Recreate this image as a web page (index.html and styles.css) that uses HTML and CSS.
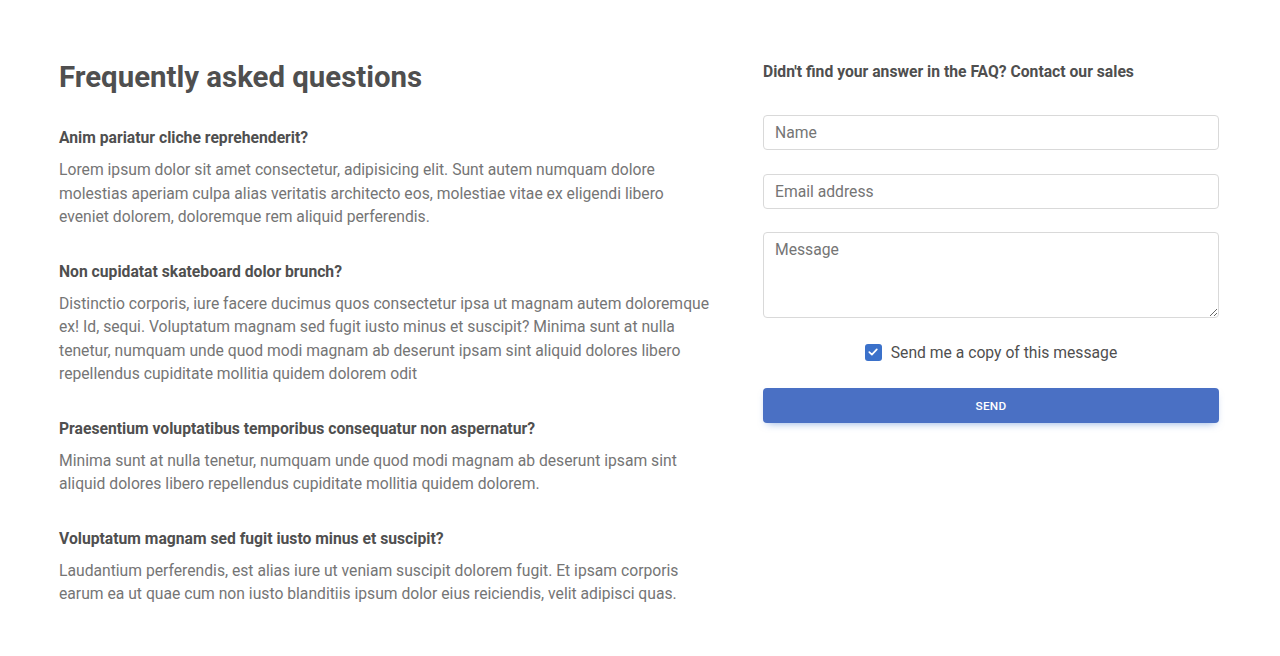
FILE: index.html
```html
<!DOCTYPE html>
<html lang="en">
<head>
<meta charset="utf-8">
<title>FAQ</title>
<link rel="stylesheet" href="styles.css">
</head>
<body>
<main class="page">
  <section class="faq">
    <h1 class="faq-title">Frequently asked questions</h1>
    <div class="qa">
      <h2 class="question">Anim pariatur cliche reprehenderit?</h2>
      <p class="answer">Lorem ipsum dolor sit amet consectetur, adipisicing elit. Sunt autem numquam dolore molestias aperiam culpa alias veritatis architecto eos, molestiae vitae ex eligendi libero eveniet dolorem, doloremque rem aliquid perferendis.</p>
    </div>
    <div class="qa">
      <h2 class="question">Non cupidatat skateboard dolor brunch?</h2>
      <p class="answer">Distinctio corporis, iure facere ducimus quos consectetur ipsa ut magnam autem doloremque ex! Id, sequi. Voluptatum magnam sed fugit iusto minus et suscipit? Minima sunt at nulla tenetur, numquam unde quod modi magnam ab deserunt ipsam sint aliquid dolores libero repellendus cupiditate mollitia quidem dolorem odit</p>
    </div>
    <div class="qa">
      <h2 class="question">Praesentium voluptatibus temporibus consequatur non aspernatur?</h2>
      <p class="answer">Minima sunt at nulla tenetur, numquam unde quod modi magnam ab deserunt ipsam sint aliquid dolores libero repellendus cupiditate mollitia quidem dolorem.</p>
    </div>
    <div class="qa">
      <h2 class="question">Voluptatum magnam sed fugit iusto minus et suscipit?</h2>
      <p class="answer">Laudantium perferendis, est alias iure ut veniam suscipit dolorem fugit. Et ipsam corporis earum ea ut quae cum non iusto blanditiis ipsum dolor eius reiciendis, velit adipisci quas.</p>
    </div>
  </section>
  <section class="contact">
    <h2 class="contact-title">Didn't find your answer in the FAQ? Contact our sales</h2>
    <form class="contact-form">
      <input class="field" type="text" placeholder="Name">
      <input class="field" type="email" placeholder="Email address">
      <textarea class="field field-area" placeholder="Message"></textarea>
      <label class="copy">
        <span class="check">
          <svg width="12" height="12" viewBox="0 0 12 12"><path d="M2.3 6.2 L4.9 8.7 L9.8 3.4" fill="none" stroke="#fff" stroke-width="1.7" stroke-linecap="round" stroke-linejoin="round"/></svg>
        </span>
        <span class="copy-text">Send me a copy of this message</span>
      </label>
      <button class="send" type="button">Send</button>
    </form>
  </section>
</main>
</body>
</html>
```

FILE: styles.css
```css
* { box-sizing: border-box; }
html, body { margin: 0; padding: 0; background: #fff; }
body {
  font-family: Roboto, "Liberation Sans", Arial, sans-serif;
  color: #4f4f4f;
}
.page {
  display: flex;
  gap: 50px;
  padding: 60px 61px 0 59px;
}
.faq { width: 654px; flex: none; }
.contact { width: 456px; flex: none; }

.faq-title {
  margin: 0 0 34px;
  font-size: 29.4px;
  line-height: 34px;
  font-weight: 700;
  color: #4f4f4f;
}
.qa { margin-bottom: 33px; }
.question {
  margin: 0 0 10px;
  font-size: 15.7px;
  line-height: 20px;
  font-weight: 700;
  color: #4f4f4f;
}
.answer {
  margin: 0;
  font-size: 15.7px;
  line-height: 23.5px;
  color: #757575;
}

.contact-title {
  margin: 2px 0 33px;
  font-size: 15.7px;
  line-height: 20px;
  font-weight: 700;
  color: #4f4f4f;
}
.contact-form { display: flex; flex-direction: column; }
.field {
  display: block;
  width: 100%;
  height: 35px;
  margin: 0 0 23.5px;
  padding: 6px 11px;
  border: 1px solid #d9d9d9;
  border-radius: 4px;
  font-family: inherit;
  font-size: 15.7px;
  color: #4f4f4f;
  background: #fff;
  outline: none;
}
.field::placeholder { color: #757575; opacity: 1; }
.field-area {
  height: 86px;
  padding-top: 7px;
  resize: vertical;
  margin-bottom: 22px;
}
.copy {
  display: flex;
  justify-content: center;
  align-items: center;
  gap: 9px;
  height: 24px;
  margin-bottom: 24px;
}
.check {
  width: 17px;
  height: 17px;
  border-radius: 3px;
  background: #3b71ca;
  display: flex;
  align-items: center;
  justify-content: center;
}
.copy-text {
  font-size: 15.7px;
  color: #4f4f4f;
}
.send {
  height: 35px;
  width: 100%;
  border: 0;
  border-radius: 4px;
  background: #4a70c4;
  color: #fff;
  font-family: inherit;
  font-size: 11.8px;
  font-weight: 500;
  text-transform: uppercase;
  letter-spacing: 0.3px;
  box-shadow: 0 4px 9px -4px rgba(59, 113, 202, 0.6);
}
```
